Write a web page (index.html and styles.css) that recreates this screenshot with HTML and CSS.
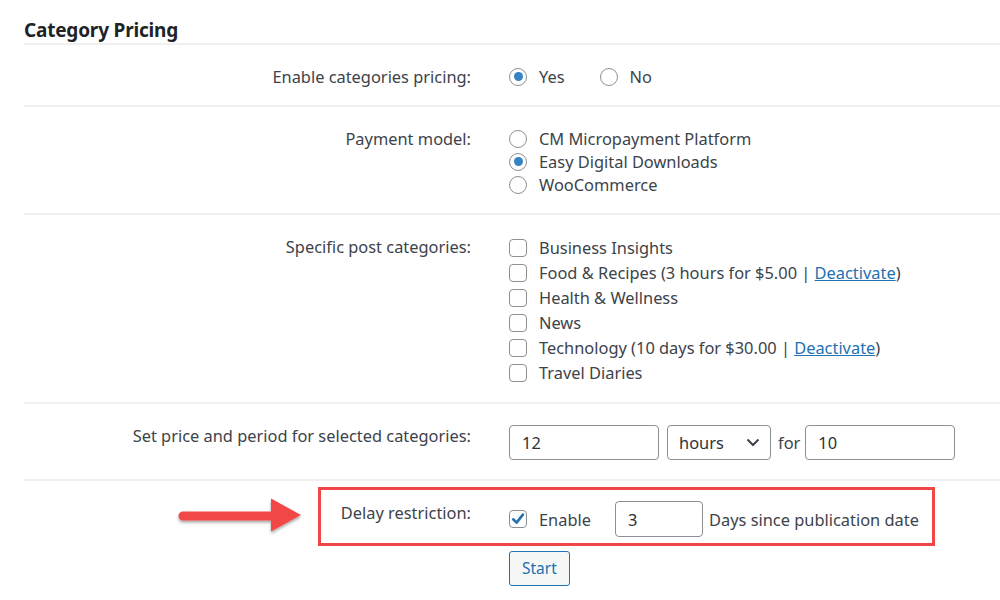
FILE: index.html
```html
<!DOCTYPE html>
<html>
<head>
<meta charset="utf-8">
<link rel="stylesheet" href="styles.css">
</head>
<body>
<div class="page">
  <h2 class="title">Category Pricing</h2>
  <div class="form">
    <div class="row">
      <div class="label">Enable categories pricing:</div>
      <div class="field inline">
        <label class="opt"><span class="radio checked"></span><span>Yes</span></label>
        <label class="opt"><span class="radio"></span><span>No</span></label>
      </div>
    </div>
    <div class="row">
      <div class="label">Payment model:</div>
      <div class="field">
        <label class="opt"><span class="radio"></span><span>CM Micropayment Platform</span></label>
        <label class="opt"><span class="radio checked"></span><span>Easy Digital Downloads</span></label>
        <label class="opt"><span class="radio"></span><span>WooCommerce</span></label>
      </div>
    </div>
    <div class="row">
      <div class="label">Specific post categories:</div>
      <div class="field cats">
        <label class="opt"><span class="cb"></span><span>Business Insights</span></label>
        <label class="opt"><span class="cb"></span><span>Food &amp; Recipes (3 hours for $5.00 | <a href="#">Deactivate</a>)</span></label>
        <label class="opt"><span class="cb"></span><span>Health &amp; Wellness</span></label>
        <label class="opt"><span class="cb"></span><span>News</span></label>
        <label class="opt"><span class="cb"></span><span>Technology (10 days for $30.00 | <a href="#">Deactivate</a>)</span></label>
        <label class="opt"><span class="cb"></span><span>Travel Diaries</span></label>
      </div>
    </div>
    <div class="row price">
      <div class="label">Set price and period for selected categories:</div>
      <div class="field controls">
        <input class="text w150" type="text" value="12">
        <div class="select"><span>hours</span><svg class="chev" width="14" height="9" viewBox="0 0 14 9"><path d="M1.5 1.5 L7 7 L12.5 1.5" fill="none" stroke="#3c434a" stroke-width="2"/></svg></div>
        <span class="for">for</span>
        <input class="text w150" type="text" value="10">
      </div>
    </div>
    <div class="row last">
      <div class="label">Delay restriction:</div>
      <div class="field">
        <div class="controls delay">
          <label class="opt"><span class="cb"><svg width="16" height="16" viewBox="0 0 16 16"><path d="M3.2 8.3 L6.6 11.6 L12.9 3.6" fill="none" stroke="#2271b1" stroke-width="2.6" stroke-linecap="round" stroke-linejoin="round"/></svg></span><span>Enable</span></label>
          <input class="text w88" type="text" value="3">
          <span>Days since publication date</span>
        </div>
        <button class="btn">Start</button>
      </div>
    </div>
  </div>
  <div class="highlight"></div>
  <svg class="arrow" width="140" height="50" viewBox="0 0 140 50">
    <defs>
      <filter id="sh" x="-20%" y="-40%" width="140%" height="180%">
        <feDropShadow dx="0" dy="2" stdDeviation="1.6" flood-color="#000" flood-opacity="0.35"/>
      </filter>
    </defs>
    <path filter="url(#sh)" fill="#f14646" d="M9 17.5 L97 17.5 L97 4.5 L127 21 L97 37.5 L97 26.5 L9 26.5 A4.5 4.5 0 0 1 9 17.5 Z"/>
  </svg>
</div>
</body>
</html>
```
FILE: styles.css
```css
* { box-sizing: border-box; }
html, body { margin: 0; padding: 0; background: #fff; }
body {
  font-family: "Noto Sans", "Open Sans", sans-serif;
  font-size: 16.4px;
  color: #3c434a;
  overflow: hidden;
}
.page {
  position: relative;
  width: 1000px;
  height: 600px;
  padding-left: 24px;
}
.title {
  margin: 0;
  padding-top: 16px;
  height: 43px;
  font-size: 19px;
  font-weight: 700;
  color: #1d2327;
  line-height: 28px;
  letter-spacing: -0.2px;
}
.form { border-top: 2px solid #f0f0f1; }
.row {
  display: grid;
  grid-template-columns: 447px 1fr;
  border-bottom: 2px solid #f0f0f1;
  padding: 20px 0 17px;
}
.row.price { padding-bottom: 19px; }
.row.price .field { margin-top: 1px; }
.row.last { border-bottom: none; padding-top: 20px; }
.label {
  text-align: right;
  line-height: 23px;
  white-space: nowrap;
}
.field {
  padding-left: 38px;
  display: flex;
  flex-direction: column;
  line-height: 23px;
}
.field.inline { flex-direction: row; gap: 35px; }
.opt {
  display: flex;
  align-items: center;
  white-space: nowrap;
}
.cats .opt { height: 25px; }
.radio {
  width: 18px; height: 18px;
  border: 1px solid #8c8f94;
  border-radius: 50%;
  margin-right: 12px;
  display: flex; align-items: center; justify-content: center;
  flex: none;
}
.radio.checked::before {
  content: "";
  width: 9px; height: 9px;
  border-radius: 50%;
  background: #3582c4;
}
.cb {
  width: 18px; height: 18px;
  border: 1px solid #8c8f94;
  border-radius: 4px;
  margin-right: 12px;
  display: flex; align-items: center; justify-content: center;
  flex: none;
}
a { color: #2271b1; text-decoration: underline; }
.controls {
  flex-direction: row;
  align-items: center;
  display: flex;
}
.text {
  font: inherit;
  color: #2c3338;
  height: 35px;
  border: 1px solid #8c8f94;
  border-radius: 4px;
  padding: 0 12px;
  background: #fff;
  outline: none;
}
.w150 { width: 150px; }
.w88 { width: 88px; margin-left: 24px; margin-right: 6px; height: 36px; }
.select {
  margin-left: 8px;
  width: 104px; height: 35px;
  border: 1px solid #8c8f94;
  border-radius: 4px;
  padding: 0 10px 0 11px;
  display: flex; align-items: center; justify-content: space-between;
  color: #2c3338;
}
.for { margin: 0 5px 0 7px; }
.delay { margin-top: 0; }
.btn {
  margin-top: 14px;
  align-self: flex-start;
  font: inherit;
  font-size: 15.5px;
  color: #2271b1;
  background: #f6f7f7;
  border: 1px solid #2271b1;
  border-radius: 3px;
  height: 35px;
  padding: 0 12px;
}
.highlight {
  position: absolute;
  left: 318px; top: 487px;
  width: 617px; height: 59px;
  border: 3px solid #f14646;
}
.arrow {
  position: absolute;
  left: 174px; top: 494px;
}
```
